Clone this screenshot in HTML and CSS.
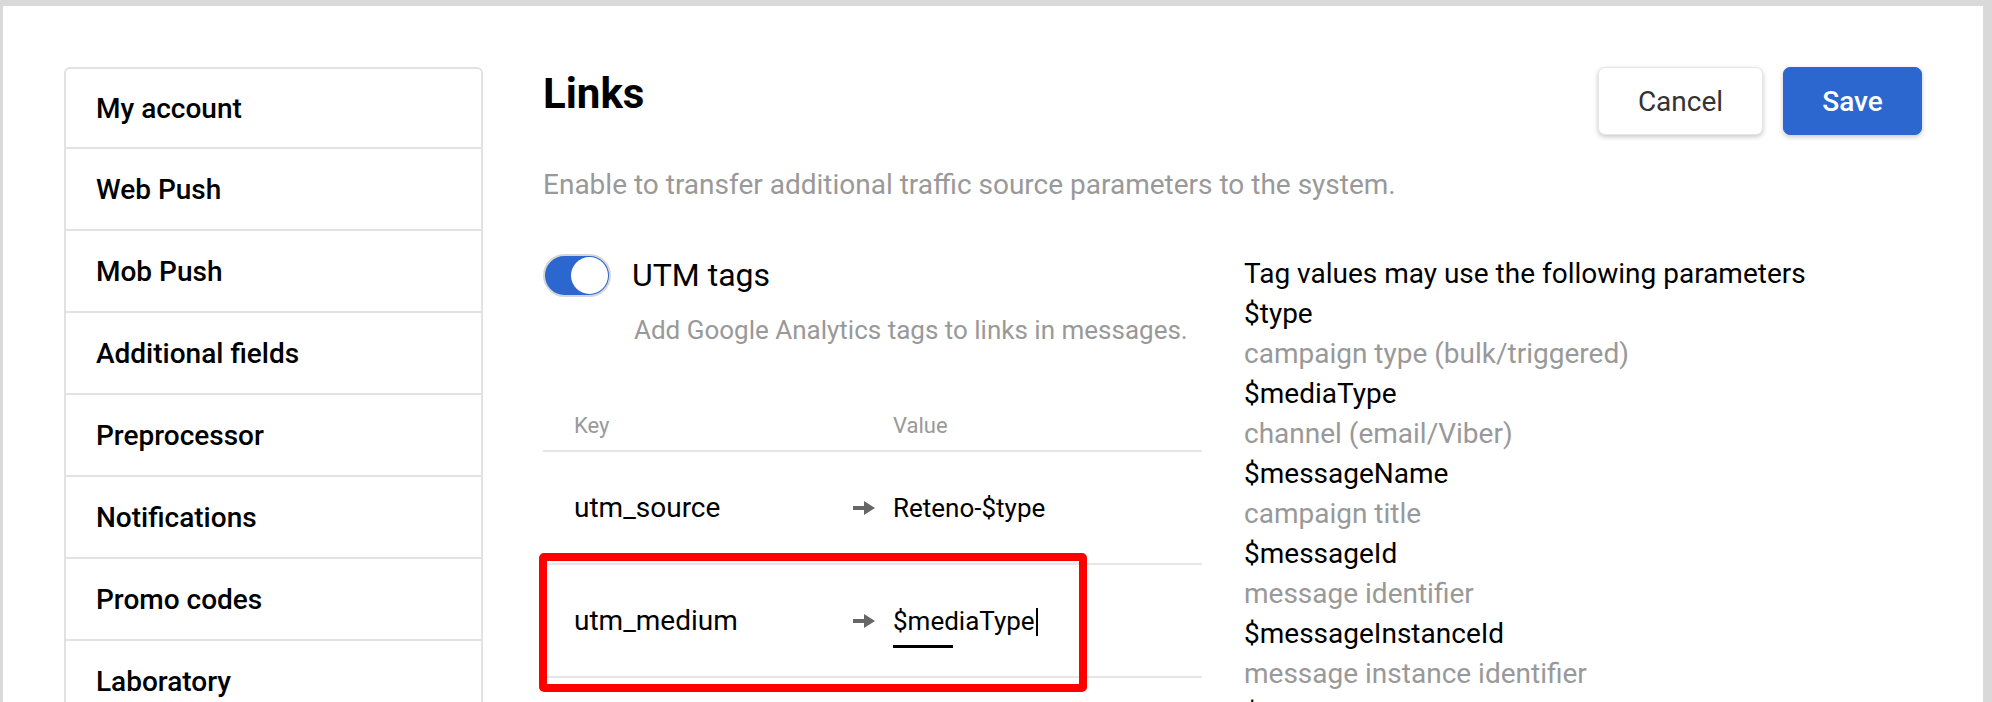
FILE: index.html
```html
<!DOCTYPE html>
<html lang="en">
<head>
<meta charset="utf-8">
<title>Links settings</title>
<link rel="stylesheet" href="styles.css">
</head>
<body>
<div class="frame">
  <div class="layout">
    <nav class="sidebar">
      <a class="nav-item">My account</a>
      <a class="nav-item">Web Push</a>
      <a class="nav-item">Mob Push</a>
      <a class="nav-item">Additional fields</a>
      <a class="nav-item">Preprocessor</a>
      <a class="nav-item">Notifications</a>
      <a class="nav-item">Promo codes</a>
      <a class="nav-item">Laboratory</a>
      <a class="nav-item">Links</a>
    </nav>
    <main class="content">
      <div class="header">
        <h1 class="title">Links</h1>
        <div class="actions">
          <button class="btn btn-cancel">Cancel</button>
          <button class="btn btn-save">Save</button>
        </div>
      </div>
      <p class="lead">Enable to transfer additional traffic source parameters to the system.</p>
      <div class="columns">
        <section class="utm">
          <div class="toggle-row">
            <span class="switch"><span class="knob"></span></span>
            <span class="toggle-label">UTM tags</span>
          </div>
          <p class="hint">Add Google Analytics tags to links in messages.</p>
          <div class="table">
            <div class="thead">
              <span>Key</span>
              <span></span>
              <span>Value</span>
            </div>
            <div class="row">
              <span class="key">utm_source</span>
              <svg class="arrow" viewBox="0 0 22 14" width="22" height="14"><path d="M0 5h11V0l11 7-11 7V9H0z"/></svg>
              <span class="val">Reteno-$type</span>
            </div>
            <div class="row row-active">
              <span class="key">utm_medium</span>
              <svg class="arrow" viewBox="0 0 22 14" width="22" height="14"><path d="M0 5h11V0l11 7-11 7V9H0z"/></svg>
              <span class="val val-edit">$mediaType<span class="caret"></span><span class="val-underline"></span></span>
              <span class="annotation"></span>
            </div>
            <div class="row">
              <span class="key">utm_campaign</span>
              <svg class="arrow" viewBox="0 0 22 14" width="22" height="14"><path d="M0 5h11V0l11 7-11 7V9H0z"/></svg>
              <span class="val">$messageName</span>
            </div>
          </div>
        </section>
        <aside class="params">
          <div class="p-head">Tag values may use the following parameters</div>
          <div class="p-name">$type</div>
          <div class="p-desc">campaign type (bulk/triggered)</div>
          <div class="p-name">$mediaType</div>
          <div class="p-desc">channel (email/Viber)</div>
          <div class="p-name">$messageName</div>
          <div class="p-desc">campaign title</div>
          <div class="p-name">$messageId</div>
          <div class="p-desc">message identifier</div>
          <div class="p-name">$messageInstanceId</div>
          <div class="p-desc">message instance identifier</div>
          <div class="p-name">$campaignId</div>
          <div class="p-desc">campaign identifier</div>
        </aside>
      </div>
    </main>
  </div>
</div>
</body>
</html>
```

FILE: styles.css
```css
* { box-sizing: border-box; }

html, body {
  margin: 0;
  padding: 0;
  height: 100%;
  overflow: hidden;
}

body {
  background: #d9d9d9;
  font-family: Roboto, "Liberation Sans", Arial, sans-serif;
  color: #000;
}

.frame {
  margin: 6px 9px 0 3px;
  background: #fff;
  height: 720px;
  overflow: hidden;
}

.layout {
  display: flex;
  align-items: flex-start;
  gap: 60px;
  padding: 61px 61px 0 61px;
}

/* Sidebar */
.sidebar {
  flex: 0 0 419px;
  display: flex;
  flex-direction: column;
  border: 2px solid #e2e2e2;
  border-radius: 6px;
}

.nav-item {
  display: flex;
  align-items: center;
  height: 82px;
  padding: 0 0 0 30px;
  border-bottom: 2px solid #e2e2e2;
  font-size: 28px;
  font-weight: 500;
  color: #000;
}

.nav-item:first-child { height: 80px; }
.nav-item:last-child { border-bottom: none; }

/* Content */
.content {
  flex: 1;
  min-width: 0;
}

.header {
  display: flex;
  justify-content: space-between;
  align-items: flex-start;
}

.title {
  margin: 2px 0 0;
  font-size: 42px;
  line-height: 50px;
  font-weight: 700;
}

.actions {
  display: flex;
  gap: 20px;
}

.btn {
  height: 68px;
  border-radius: 7px;
  font-family: inherit;
  font-size: 28px;
  cursor: pointer;
  box-shadow: 0 2px 5px rgba(0, 0, 0, 0.22);
}

.btn-cancel {
  width: 165px;
  background: #fff;
  border: 1px solid #e6e6e6;
  color: #333;
}

.btn-save {
  width: 139px;
  background: #2c66cf;
  border: 1px solid #2c66cf;
  color: #fff;
  font-weight: 500;
}

.lead {
  margin: 30px 0 0;
  font-size: 28px;
  line-height: 40px;
  color: #999;
}

.columns {
  display: flex;
  gap: 42px;
  margin-top: 49px;
}

.utm {
  flex: 0 0 659px;
}

.toggle-row {
  display: flex;
  align-items: center;
  gap: 21px;
  height: 43px;
}

.switch {
  display: flex;
  justify-content: flex-end;
  align-items: center;
  width: 68px;
  height: 43px;
  padding: 0 1px;
  border: 2px solid #d6d6d6;
  border-radius: 22px;
  background: #2c66cf;
}

.knob {
  width: 37px;
  height: 37px;
  border-radius: 50%;
  background: #fff;
}

.toggle-label {
  font-size: 32px;
  line-height: 43px;
}

.hint {
  margin: 13px 0 0 91px;
  font-size: 26px;
  line-height: 40px;
  color: #999;
  white-space: nowrap;
}

.table {
  margin-top: 60px;
}

.thead,
.row {
  display: grid;
  grid-template-columns: 279px 40px 1fr;
  align-items: center;
  padding-left: 31px;
}

.thead {
  font-size: 22px;
  line-height: 32px;
  color: #999;
  padding-bottom: 8px;
  border-bottom: 2px solid #e6e6e6;
}

.row {
  position: relative;
  height: 113px;
  border-bottom: 2px solid #e6e6e6;
  font-size: 28px;
  line-height: 40px;
}

.val {
  font-size: 26px;
}

.arrow {
  display: block;
  fill: #666;
}

.val-edit {
  position: relative;
}

.caret {
  display: inline-block;
  width: 2px;
  height: 28px;
  margin-left: 1px;
  vertical-align: -6px;
  background: #000;
}

.val-underline {
  position: absolute;
  left: 0;
  top: 44px;
  width: 60px;
  height: 3px;
  background: #000;
}

.annotation {
  position: absolute;
  top: -12px;
  left: -4px;
  width: 548px;
  height: 139px;
  border: 8px solid #ff0000;
  border-radius: 5px;
  pointer-events: none;
}

/* Parameters */
.params {
  flex: 1;
  font-size: 28px;
  line-height: 40px;
}

.p-head,
.p-name {
  color: #000;
}

.p-desc {
  color: #999;
}
```
